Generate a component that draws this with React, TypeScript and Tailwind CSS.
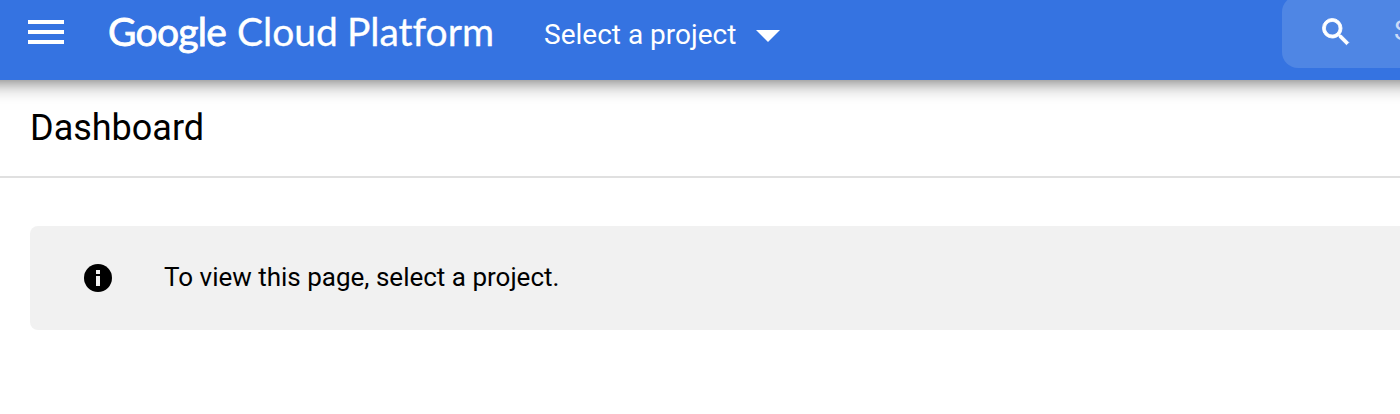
function MenuIcon() {
  return (
    <svg className="block h-6 w-9 shrink-0" viewBox="0 0 36 24" fill="#fff" shapeRendering="crispEdges">
      <path d="M0 0h36v4H0zM0 10h36v4H0zM0 20h36v4H0z" />
    </svg>
  );
}

function Wordmark() {
  return (
    <div className="ml-[44px] flex h-16 w-[386px] shrink-0 items-center pb-px font-['Lato',sans-serif] text-[39px] leading-none whitespace-nowrap text-white [font-variant-ligatures:none]">
      <span className="w-[129px] tracking-[-0.7px] [-webkit-text-stroke:0.8px_white]">Google</span>
      <span className="w-[110px] [-webkit-text-stroke:0.3px_white]">Cloud</span>
      <span className="[-webkit-text-stroke:0.3px_white]">Platform</span>
    </div>
  );
}

function SearchBox() {
  return (
    <div className="-mt-1 ml-auto flex h-[72px] w-[118px] shrink-0 items-center overflow-hidden rounded-l-[16px] bg-[#4f86e4] pl-9">
      <svg className="block size-9 shrink-0" viewBox="0 0 24 24" fill="#fff" stroke="#fff" strokeWidth="0.6">
        <path d="M15.5 14h-.79l-.28-.27A6.471 6.471 0 0 0 16 9.5 6.5 6.5 0 1 0 9.5 16c1.61 0 3.09-.59 4.23-1.57l.27.28v.79l5 4.99L20.49 19l-4.99-5zm-6 0C7.01 14 5 11.99 5 9.5S7.01 5 9.5 5 14 7.01 14 9.5 11.99 14 9.5 14z" />
      </svg>
      <span className="ml-10 pb-0.5 text-[28px] leading-9 text-[#cadaf7]">Search</span>
    </div>
  );
}

function InfoIcon() {
  return (
    <svg className="block size-7 shrink-0" viewBox="0 0 28 28">
      <circle cx="14" cy="14" r="14" fill="#000" />
      <path d="M12 6h4v4h-4zM12 12h4v10h-4z" fill="#f1f1f1" />
    </svg>
  );
}

export default function App() {
  return (
    <div className="flex h-[414px] w-[1400px] flex-col overflow-hidden bg-white font-['Roboto',sans-serif] text-black">
      <header className="relative z-10 -mx-8 flex h-20 shrink-0 items-start bg-[#3573e1] pr-8 pl-[60px] shadow-[0_0_20px_rgba(0,0,0,0.68)]">
        <div className="flex h-16 items-center">
          <MenuIcon />
          <Wordmark />
          <button className="ml-[50px] flex items-center text-[28px] leading-9 whitespace-nowrap text-white">
            <span className="w-[212px] pt-1.5 text-left">Select a project</span>
            <svg className="mt-2 block h-3 w-6" viewBox="0 0 24 12" fill="#fff">
              <path d="M0 0h24L12 12z" />
            </svg>
          </button>
        </div>
        <SearchBox />
      </header>
      <div className="flex h-[98px] shrink-0 items-center border-b-2 border-[#e0e0e0] pl-[30px]">
        <h1 className="text-[36px] leading-none">Dashboard</h1>
      </div>
      <main className="pt-12 pl-[30px]">
        <div className="flex h-[104px] items-center rounded-l-lg bg-[#f1f1f1] pl-[54px]">
          <InfoIcon />
          <p className="ml-[52px] pb-0.5 text-[26px] leading-9">To view this page, select a project.</p>
        </div>
      </main>
    </div>
  );
}
